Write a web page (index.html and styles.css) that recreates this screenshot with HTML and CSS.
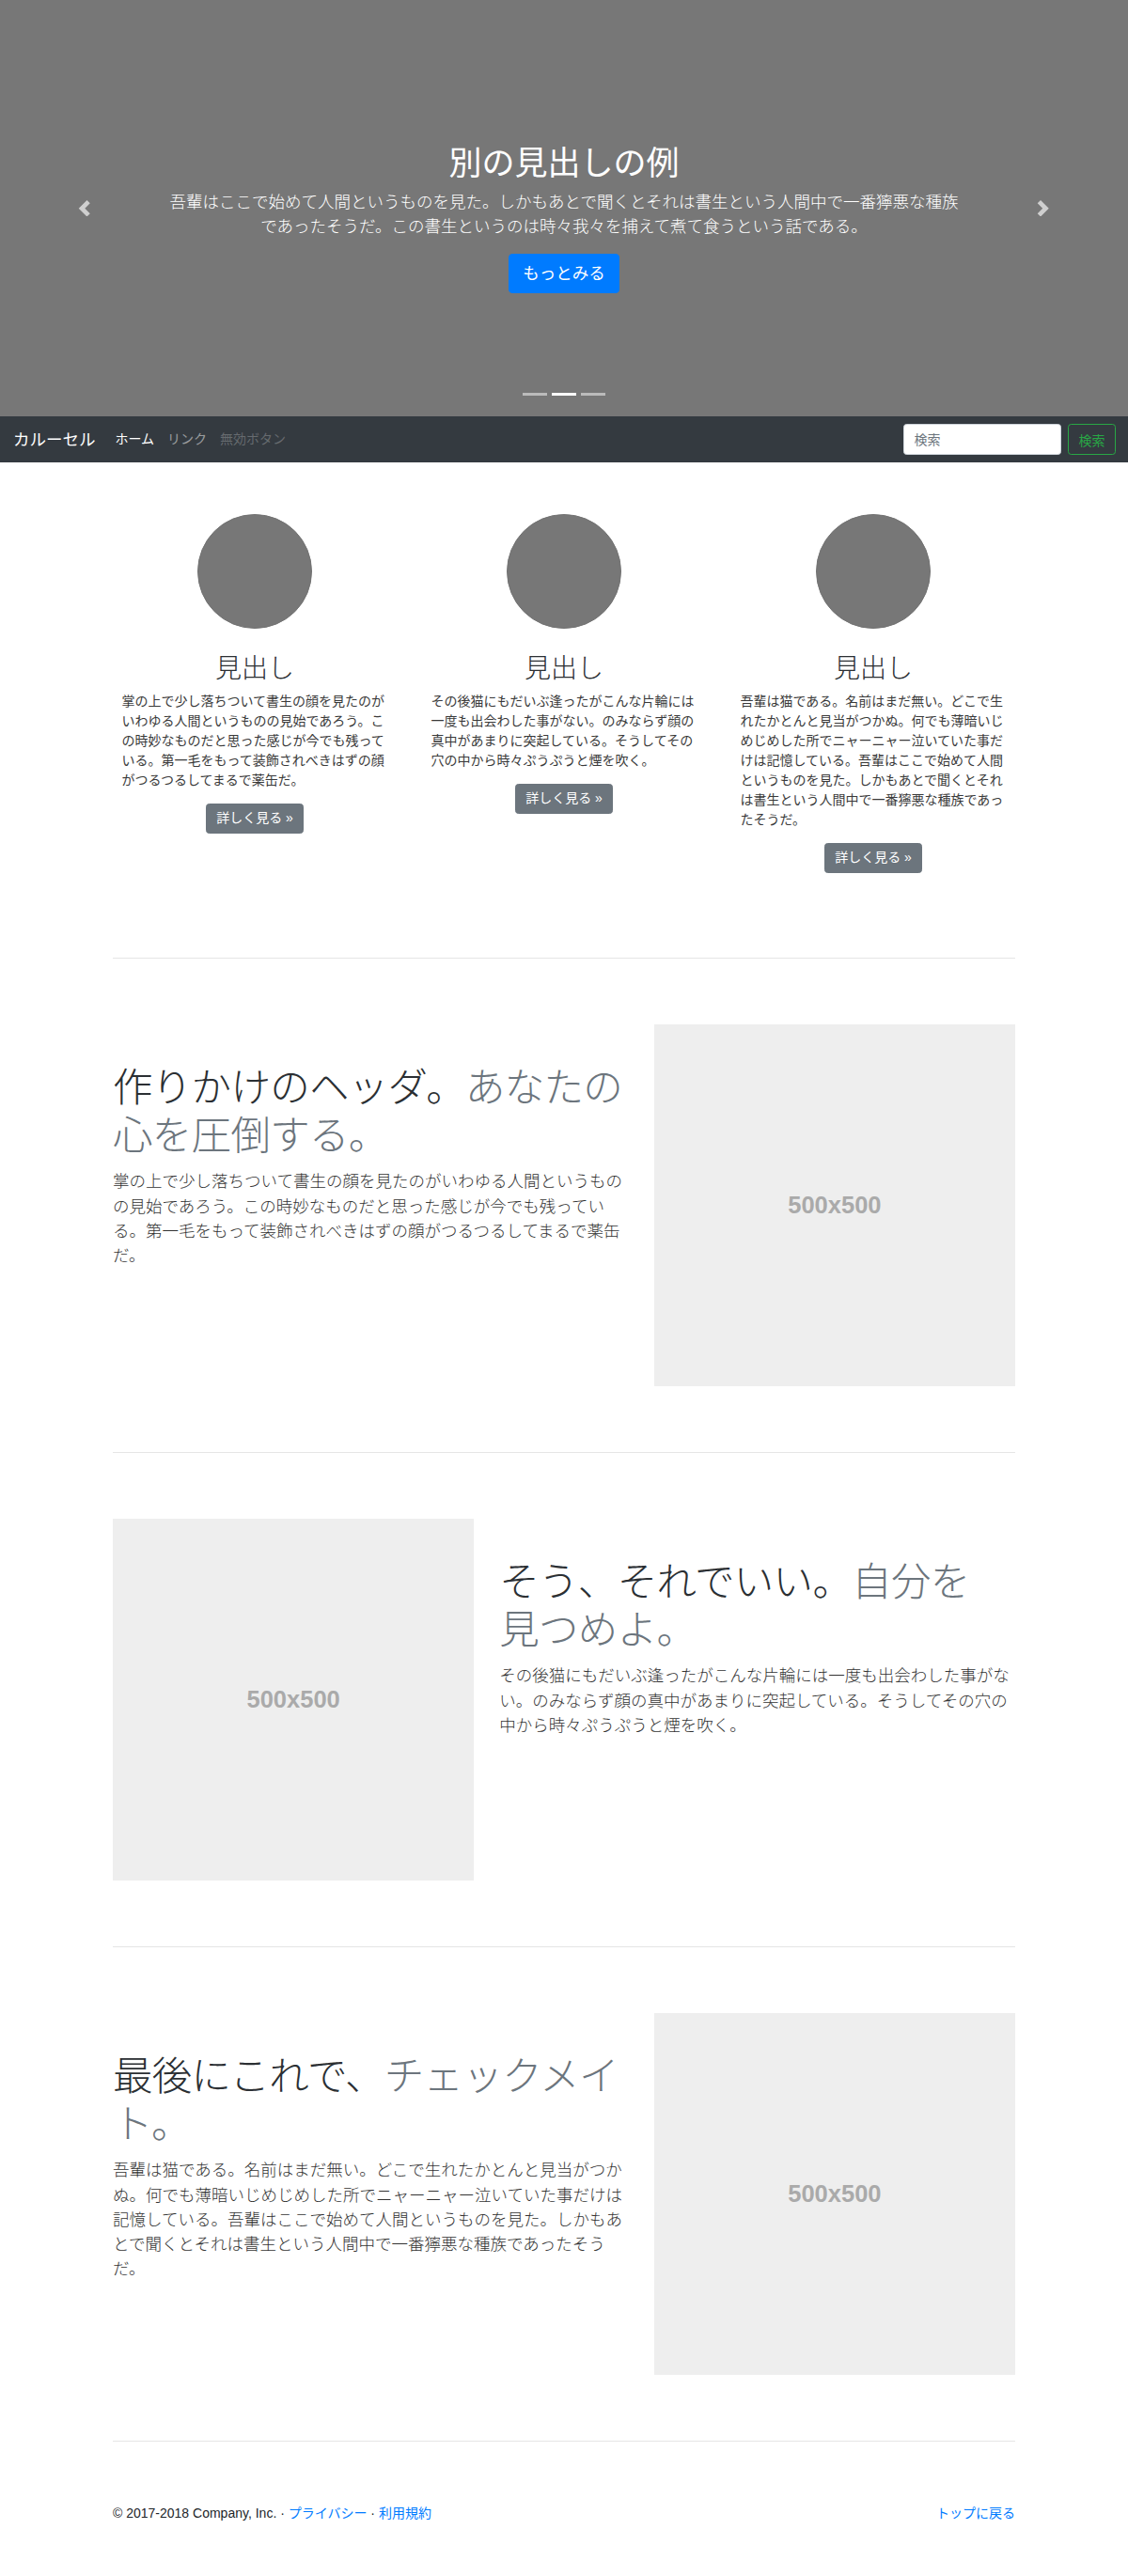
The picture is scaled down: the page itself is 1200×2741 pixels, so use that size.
FILE: index.html
```html
<!DOCTYPE html>
<html lang="ja">
<head>
<meta charset="utf-8">
<title>カルーセル</title>
<link rel="stylesheet" href="styles.css">
</head>
<body>
<div class="carousel">
  <div class="caption">
    <h1 class="caption-title">別の見出しの例</h1>
    <p class="caption-lead">吾輩はここで始めて人間というものを見た。しかもあとで聞くとそれは書生という人間中で一番獰悪な種族であったそうだ。この書生というのは時々我々を捕えて煮て食うという話である。</p>
    <a class="btn-primary" href="#">もっとみる</a>
  </div>
  <ol class="indicators">
    <li class="indicator"></li>
    <li class="indicator active"></li>
    <li class="indicator"></li>
  </ol>
  <a class="control control-prev" href="#"><svg class="chevron" viewBox="0 0 8 8"><path d="M5.25 0l-4 4 4 4 1.5-1.5L4.25 4l2.5-2.5L5.25 0z"/></svg></a>
  <a class="control control-next" href="#"><svg class="chevron" viewBox="0 0 8 8"><path d="M2.75 0l-1.5 1.5L3.75 4l-2.5 2.5L2.75 8l4-4-4-4z"/></svg></a>
</div>

<nav class="navbar">
  <a class="brand" href="#">カルーセル</a>
  <ul class="nav">
    <li><a class="nav-link active" href="#">ホーム</a></li>
    <li><a class="nav-link" href="#">リンク</a></li>
    <li><a class="nav-link disabled" href="#">無効ボタン</a></li>
  </ul>
  <form class="search">
    <input class="search-input" type="text" placeholder="検索">
    <button class="search-btn" type="button">検索</button>
  </form>
</nav>

<main class="container">
  <div class="marketing">
    <div class="col">
      <div class="circle"></div>
      <h2 class="col-title">見出し</h2>
      <p class="col-text">掌の上で少し落ちついて書生の顔を見たのがいわゆる人間というものの見始であろう。この時妙なものだと思った感じが今でも残っている。第一毛をもって装飾されべきはずの顔がつるつるしてまるで薬缶だ。</p>
      <a class="btn-secondary" href="#">詳しく見る »</a>
    </div>
    <div class="col">
      <div class="circle"></div>
      <h2 class="col-title">見出し</h2>
      <p class="col-text">その後猫にもだいぶ逢ったがこんな片輪には一度も出会わした事がない。のみならず顔の真中があまりに突起している。そうしてその穴の中から時々ぷうぷうと煙を吹く。</p>
      <a class="btn-secondary" href="#">詳しく見る »</a>
    </div>
    <div class="col">
      <div class="circle"></div>
      <h2 class="col-title">見出し</h2>
      <p class="col-text">吾輩は猫である。名前はまだ無い。どこで生れたかとんと見当がつかぬ。何でも薄暗いじめじめした所でニャーニャー泣いていた事だけは記憶している。吾輩はここで始めて人間というものを見た。しかもあとで聞くとそれは書生という人間中で一番獰悪な種族であったそうだ。</p>
      <a class="btn-secondary" href="#">詳しく見る »</a>
    </div>
  </div>

  <hr class="divider">

  <div class="featurette">
    <div class="feat-text">
      <h2 class="feat-heading">作りかけのヘッダ。<span class="muted">あなたの心を圧倒する。</span></h2>
      <p class="feat-lead">掌の上で少し落ちついて書生の顔を見たのがいわゆる人間というものの見始であろう。この時妙なものだと思った感じが今でも残っている。第一毛をもって装飾されべきはずの顔がつるつるしてまるで薬缶だ。</p>
    </div>
    <div class="feat-image"><div class="placeholder">500x500</div></div>
  </div>

  <hr class="divider">

  <div class="featurette featurette-reverse">
    <div class="feat-image"><div class="placeholder">500x500</div></div>
    <div class="feat-text">
      <h2 class="feat-heading">そう、それでいい。<span class="muted">自分を<br>見つめよ。</span></h2>
      <p class="feat-lead">その後猫にもだいぶ逢ったがこんな片輪には一度も出会わした事がない。のみならず顔の真中があまりに突起している。そうしてその穴の中から時々ぷうぷうと煙を吹く。</p>
    </div>
  </div>

  <hr class="divider">

  <div class="featurette">
    <div class="feat-text">
      <h2 class="feat-heading">最後にこれで、<span class="muted">チェックメイト。</span></h2>
      <p class="feat-lead">吾輩は猫である。名前はまだ無い。どこで生れたかとんと見当がつかぬ。何でも薄暗いじめじめした所でニャーニャー泣いていた事だけは記憶している。吾輩はここで始めて人間というものを見た。しかもあとで聞くとそれは書生という人間中で一番獰悪な種族であったそうだ。</p>
    </div>
    <div class="feat-image"><div class="placeholder">500x500</div></div>
  </div>

  <hr class="divider divider-last">

  <footer class="footer">
    <p class="footer-left">© 2017-2018 Company, Inc. · <a class="link" href="#">プライバシー</a> · <a class="link" href="#">利用規約</a></p>
    <p class="footer-right"><a class="link" href="#">トップに戻る</a></p>
  </footer>
</main>
</body>
</html>
```

FILE: styles.css
```css
* {
  box-sizing: border-box;
}

html, body {
  margin: 0;
  padding: 0;
}

body {
  font-family: "Liberation Sans", "Noto Sans CJK JP", sans-serif;
  font-size: 14px;
  line-height: 1.5;
  color: #212529;
  background: #fff;
}

a {
  text-decoration: none;
}

/* ---------- Carousel ---------- */
.carousel {
  position: relative;
  height: 443px;
  background: #777;
  overflow: hidden;
}

.caption {
  padding: 153px 176px 0;
  text-align: center;
  color: #fff;
}

.caption-title {
  margin: 0 0 7px;
  font-size: 35px;
  line-height: 1.2;
  font-weight: 400;
}

.caption-lead {
  margin: 0 0 15.5px;
  font-size: 17.5px;
  line-height: 1.5;
  font-weight: 300;
}

.btn-primary {
  display: inline-block;
  height: 42px;
  padding: 7px 14px;
  font-size: 17.5px;
  line-height: 26px;
  color: #fff;
  background: #007bff;
  border: 1px solid #007bff;
  border-radius: 4px;
}

.indicators {
  position: absolute;
  left: 0;
  right: 0;
  bottom: 22px;
  margin: 0;
  padding: 0;
  list-style: none;
  display: flex;
  justify-content: center;
}

.indicator {
  width: 26px;
  height: 3px;
  margin: 0 2.6px;
  background: rgba(255, 255, 255, 0.5);
}

.indicator.active {
  background: #fff;
}

.control {
  position: absolute;
  top: 0;
  bottom: 0;
  width: 180px;
  display: flex;
  align-items: center;
  justify-content: center;
  opacity: 0.65;
}

.control-prev {
  left: 0;
}

.control-next {
  right: 0;
}

.chevron {
  width: 17.5px;
  height: 17.5px;
  fill: #fff;
}

/* ---------- Navbar ---------- */
.navbar {
  height: 49px;
  display: flex;
  align-items: center;
  padding: 0 13px 0 14px;
  background: #343a40;
}

.brand {
  font-size: 17.5px;
  line-height: 26px;
  color: #fff;
  margin-right: 14px;
}

.nav {
  display: flex;
  margin: 0;
  padding: 0;
  list-style: none;
}

.nav-link {
  display: block;
  padding: 0 7px;
  font-size: 14px;
  color: rgba(255, 255, 255, 0.5);
}

.nav-link.active {
  color: #fff;
}

.nav-link.disabled {
  color: rgba(255, 255, 255, 0.25);
}

.search {
  margin: 0 0 0 auto;
  display: flex;
  align-items: center;
}

.search-input {
  width: 168px;
  height: 33.5px;
  margin-right: 7px;
  padding: 0 10.5px;
  font-family: "Liberation Sans", "Noto Sans CJK JP", sans-serif;
  font-size: 14px;
  color: #495057;
  background: #fff;
  border: 1px solid #ced4da;
  border-radius: 3.5px;
}

.search-input::placeholder {
  color: #6c757d;
}

.search-btn {
  width: 51px;
  height: 33px;
  padding: 0;
  font-family: "Liberation Sans", "Noto Sans CJK JP", sans-serif;
  font-size: 14px;
  color: #28a745;
  background: transparent;
  border: 1px solid #28a745;
  border-radius: 3.5px;
}

/* ---------- Marketing ---------- */
.container {
  width: 960px;
  margin: 0 auto;
}

.marketing {
  display: grid;
  grid-template-columns: repeat(3, 1fr);
  align-items: start;
  margin: 55px -13.5px 0;
  padding-bottom: 20.4px;
}

.col {
  padding: 0 13.5px;
  text-align: center;
}

.circle {
  width: 122px;
  height: 122px;
  margin: 0 auto;
  border-radius: 50%;
  background: #777;
  border: 1px solid #727272;
}

.col-title {
  margin: 26px 0 7px;
  font-size: 28px;
  line-height: 1.2;
  font-weight: 300;
  color: #2b2f33;
}

.col-text {
  width: 283px;
  margin: 0 auto 14px;
  text-align: left;
  color: #3a3a3a;
}

.btn-secondary {
  display: inline-block;
  height: 32px;
  padding: 4.5px 10.5px;
  font-size: 14px;
  line-height: 21px;
  color: #fff;
  background: #6c757d;
  border: 1px solid #6c757d;
  border-radius: 3.5px;
}

/* ---------- Featurettes ---------- */
.divider {
  margin: 70px 0;
  border: 0;
  border-top: 1px solid rgba(0, 0, 0, 0.1);
  height: 0;
}

.divider-last {
  margin-bottom: 66px;
}

.featurette {
  display: grid;
  grid-template-columns: 7fr 5fr;
  align-items: start;
  margin: 0 -13.5px;
}

.featurette-reverse {
  grid-template-columns: 5fr 7fr;
}

.feat-text,
.feat-image {
  padding: 0 13.5px;
}

.feat-heading {
  margin: 42.4px 0 10px;
  font-size: 42.5px;
  line-height: 1.2;
  font-weight: 300;
  letter-spacing: -0.7px;
  color: #2b2f33;
}

.muted {
  color: #6c757d;
}

.feat-lead {
  margin: 0;
  font-size: 17.5px;
  line-height: 1.5;
  font-weight: 300;
  color: #333;
}

.placeholder {
  height: 385px;
  display: flex;
  align-items: center;
  justify-content: center;
  background: #eee;
  color: #aaa;
  font-family: "Liberation Sans", sans-serif;
  font-size: 25.5px;
  font-weight: 700;
}

/* ---------- Footer ---------- */
.footer {
  display: flex;
  justify-content: space-between;
  padding: 0 0 40px;
  color: #212529;
}

.footer-left,
.footer-right {
  margin: 0;
}

.link {
  color: #007bff;
}
```
